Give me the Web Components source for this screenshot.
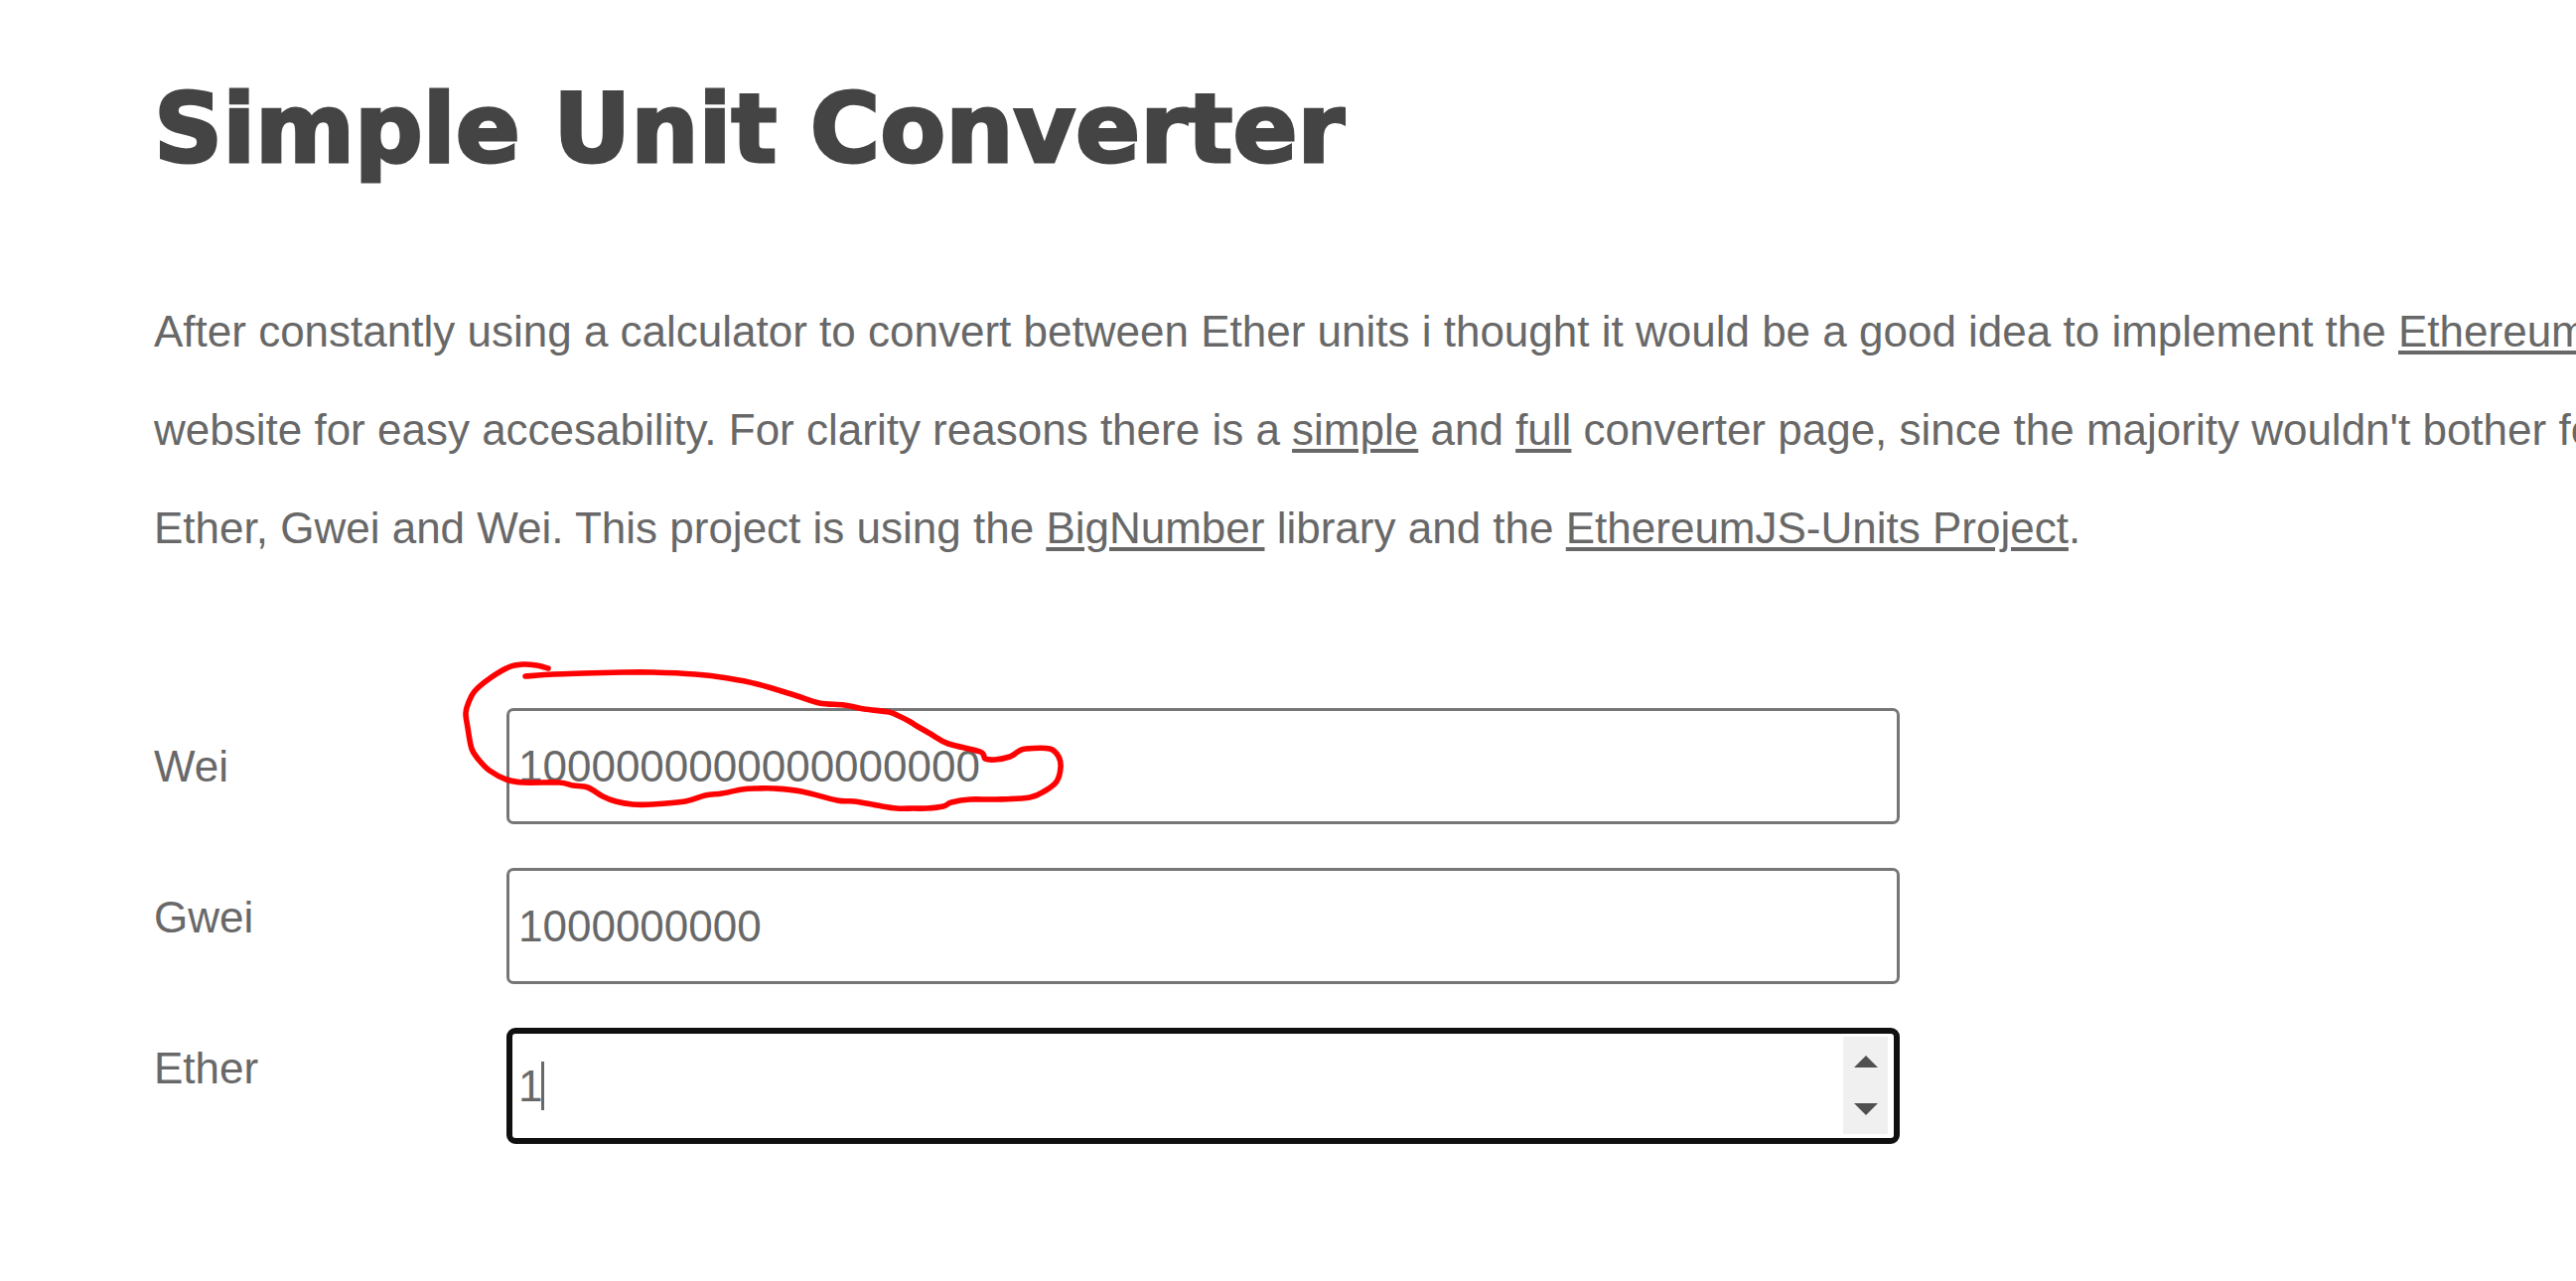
<!DOCTYPE html>
<html lang="en">
<head>
<meta charset="utf-8">
<title>Simple Unit Converter</title>
<style>
  body { margin: 0; background: #fff; color: #686868; font: 44px/99px "Liberation Sans", Arial, sans-serif; overflow-x: hidden; }
  a { color: inherit; text-decoration-thickness: 4px; text-underline-offset: 4px; }
</style>
</head>
<body>
<converter-page>
  <page-title slot="title">Simple Unit Converter</page-title>
  <intro-text slot="intro">After constantly using a calculator to convert between Ether units i thought it would be a good idea to implement the <a href="#ethereum">Ethereum</a><br>website for easy accesability. For clarity reasons there is a <a href="#simple">simple</a> and <a href="#full">full</a> converter page, since the majority wouldn't bother for<br>Ether, Gwei and Wei. This project is using the <a href="#bignumber">BigNumber</a> library and the <a href="#units">EthereumJS-Units Project</a>.</intro-text>
  <unit-form></unit-form>
</converter-page>
<script>
class BaseElement extends HTMLElement {
  constructor() {
    super();
    this.attachShadow({ mode: "open" }).innerHTML = this.constructor.markup;
  }
}

customElements.define("converter-page", class extends BaseElement {
  static markup = `
    <style>
      :host { display: block; padding: 58px 0 80px 155px; }
      main { display: flex; flex-direction: column; }
      .intro { margin: 82px 0 132px; }
    </style>
    <main>
      <slot name="title"></slot>
      <div class="intro"><slot name="intro"></slot></div>
      <slot></slot>
    </main>`;
});

customElements.define("page-title", class extends BaseElement {
  static markup = `
    <style>
      :host { display: block; }
      h1 { margin: 0; color: #444; font: 900 96px/144px "DejaVu Sans", "Arial Black", sans-serif; white-space: nowrap; -webkit-text-stroke: 3px #444; }
    </style>
    <h1><slot></slot></h1>`;
});

customElements.define("intro-text", class extends BaseElement {
  static markup = `
    <style>
      :host { display: block; }
      p { margin: 0; white-space: nowrap; }
    </style>
    <p><slot></slot></p>`;
});

/* Up and down arrows at the end of the focused number field. */
customElements.define("spin-arrows", class extends BaseElement {
  static markup = `
    <style>
      :host { display: flex; flex-direction: column; width: 45px; background: #f0f0f0; }
      button { flex: 1; display: flex; justify-content: center; padding: 0; border: 0; background: none; }
      .up { align-items: flex-end; padding-bottom: 18px; }
      .down { align-items: flex-start; padding-top: 18px; }
      svg { display: block; fill: #505050; }
    </style>
    <button class="up" type="button" aria-label="Increase"><svg width="24" height="12"><path d="M0 12 12 0 24 12z"/></svg></button>
    <button class="down" type="button" aria-label="Decrease"><svg width="24" height="12"><path d="M0 0 12 12 24 0z"/></svg></button>`;
});

/* Freehand red line round the Wei value, smoothed through its points. */
customElements.define("pen-stroke", class extends BaseElement {
  static markup = `
    <style>
      :host { display: block; pointer-events: none; }
      svg { display: block; overflow: visible; }
      path { fill: none; stroke: #f00; stroke-width: 5.6; stroke-linecap: round; stroke-linejoin: round; }
    </style>
    <svg width="700" height="150" viewBox="510 713 700 150" aria-hidden="true"><path/></svg>`;
  connectedCallback() {
    const p = `552,673 540,670 527,669 512,672 492,684 478,696 472,707 469,718 471,733 475,754 482,765 493,776 510,785 527,788
      563,788 577,791 592,793 607,802 620,807 637,810 657,810 690,807 710,801 727,799 747,795 763,794 779,794 807,797 843,806
      860,807 883,811 903,814 920,814 933,814 950,812 958,808 977,805 1003,805 1037,803 1053,796 1064,787 1068,773 1066,762
      1057,754 1033,754 1025,757 1017,762 1002,765 992,764 987,757 955,749 937,739 923,731 915,726 905,721 895,717 870,714
      850,710 825,708 800,700 763,689 733,683 700,679 657,677 627,677 587,678 557,679 529,681`
      .trim().split(/\s+/).map(s => s.split(",").map(Number));
    let d = "M" + p[0];
    for (let i = 0; i < p.length - 1; i++) {
      const a = p[i - 1] || p[i], b = p[i], c = p[i + 1], e = p[i + 2] || c;
      d += `C${b[0] + (c[0] - a[0]) / 6} ${b[1] + (c[1] - a[1]) / 6} ${c[0] - (e[0] - b[0]) / 6} ${c[1] - (e[1] - b[1]) / 6} ${c[0]} ${c[1]}`;
    }
    this.shadowRoot.querySelector("path").setAttribute("d", d);
  }
});

customElements.define("unit-form", class extends BaseElement {
  static markup = `
    <style>
      :host { display: block; }
      form { display: grid; grid-template-columns: 355px minmax(0, 1403px); align-items: start; margin-right: 40px; }
      .labels { display: flex; flex-direction: column; gap: 53px; padding-top: 9px; }
      .fields { display: flex; flex-direction: column; gap: 44px; position: relative; }
      .field { display: grid; position: relative; }
      input { box-sizing: border-box; width: 100%; height: 117px; margin: 0; padding: 0 9px; border: 3px solid #767676; border-radius: 7px;
              background: #fff; color: inherit; font: inherit; line-height: 50px; outline: 0; appearance: textfield; }
      input::-webkit-inner-spin-button { appearance: none; margin: 0; }
      .active input { padding: 0 6px; border: 6px solid #101010; border-radius: 9px; }
      .caret { position: absolute; left: 35px; top: 34px; width: 3px; height: 49px; background: #686868; }
      spin-arrows { position: absolute; right: 12px; top: 9px; bottom: 10px; }
      pen-stroke { position: absolute; left: 0; top: 0; }
    </style>
    <form>
      <div class="labels">
        <label for="wei">Wei</label>
        <label for="gwei">Gwei</label>
        <label for="ether">Ether</label>
      </div>
      <div class="fields">
        <div class="field"><input id="wei" type="number" value="1000000000000000000"></div>
        <div class="field"><input id="gwei" type="number" value="1000000000"></div>
        <div class="field active"><input id="ether" type="number" value="1"><span class="caret"></span><spin-arrows></spin-arrows></div>
        <pen-stroke></pen-stroke>
      </div>
    </form>`;
});
</script>
</body>
</html>
